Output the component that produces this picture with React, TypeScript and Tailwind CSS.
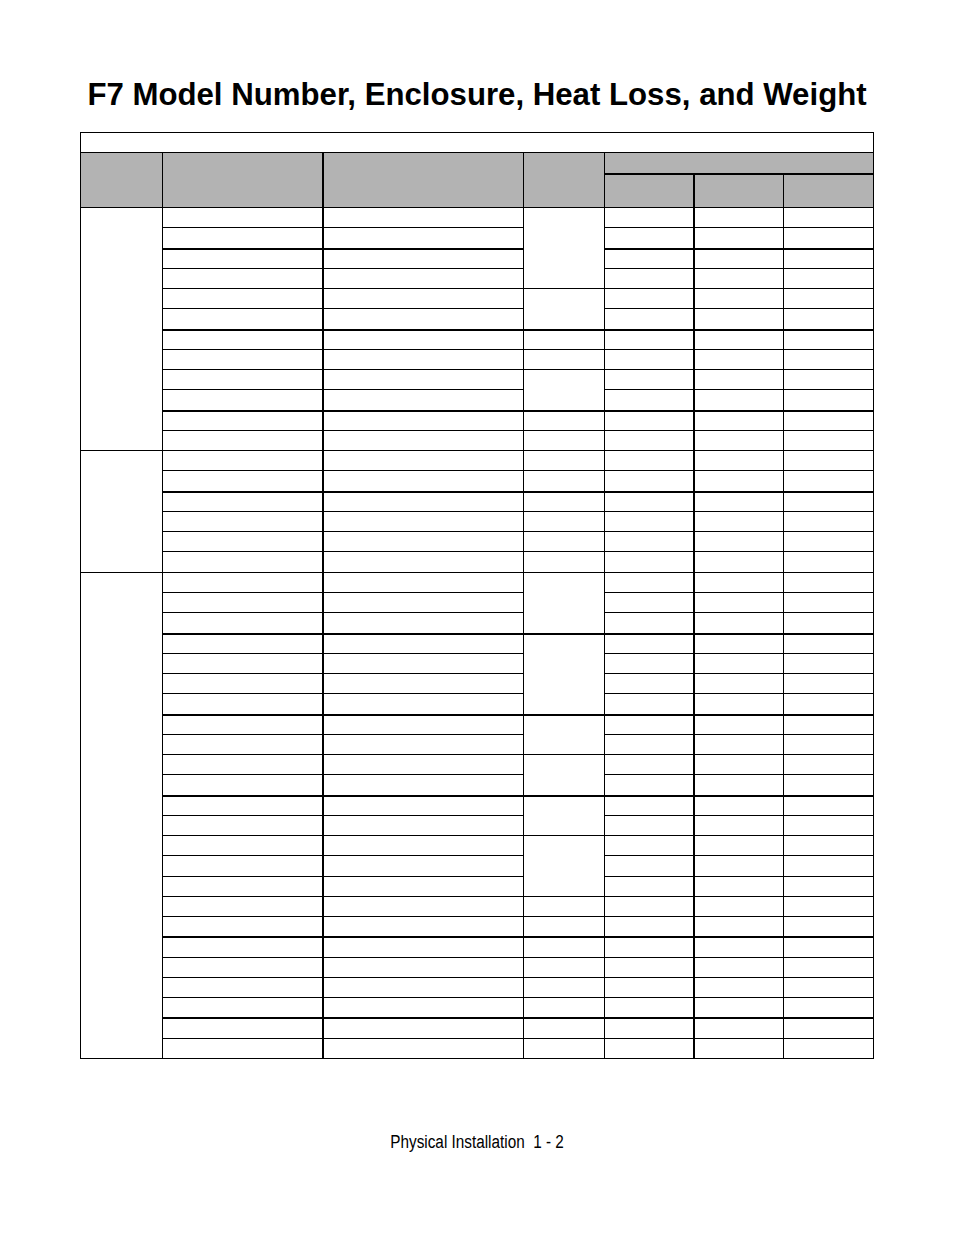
const SPAN: Record<number, string> = {
  1: "row-span-1",
  2: "row-span-2",
  3: "row-span-3",
  4: "row-span-4",
  6: "row-span-6",
  12: "row-span-12",
  24: "row-span-24",
};

const COL: Record<number, string> = {
  1: "col-start-1",
  2: "col-start-2",
  3: "col-start-3 border-l-2",
  4: "col-start-4",
  5: "col-start-5",
  6: "col-start-6 border-l-2",
  7: "col-start-7",
};

// rows (0-based, within the data block) that start with a heavy rule
const THICK = new Set([2, 6, 10, 14, 21, 25, 29, 36, 40]);

// merged runs for the frame-size column and the enclosure column
const GROUPS = [12, 6, 24];
const ENCL = [4, 2, 1, 1, 2, 1, 1, 1, 1, 1, 1, 1, 1, 3, 4, 2, 2, 2, 3, 1, 1, 1, 1, 1, 1, 1, 1];

type Cell = { row: number; col: number; span: number };

function buildCells(): Cell[] {
  const cells: Cell[] = [];
  let r = 0;
  for (const g of GROUPS) {
    cells.push({ row: r, col: 1, span: g });
    r += g;
  }
  r = 0;
  for (const e of ENCL) {
    cells.push({ row: r, col: 4, span: e });
    r += e;
  }
  for (let i = 0; i < 42; i++) {
    for (const c of [2, 3, 5, 6, 7]) cells.push({ row: i, col: c, span: 1 });
  }
  return cells.sort((a, b) => a.row - b.row || a.col - b.col);
}

function DataCell({ cell }: { cell: Cell }) {
  const thick = THICK.has(cell.row) ? "border-t-2" : "border-t";
  // grid rows 1..3 are title + header, data starts at grid row 4
  return (
    <div
      className={`${COL[cell.col]} ${SPAN[cell.span]} ${thick} border-l border-black bg-white`}
      style={{ gridRowStart: cell.row + 4 }}
    />
  );
}

export default function App() {
  const cells = buildCells();
  return (
    <div className="min-h-[1235px] w-[954px] bg-white text-black font-['Liberation_Sans',Arial,sans-serif]">
      <h1 className="pt-[77px] text-center text-[31.2px] font-bold leading-[36px]">
        F7 Model Number, Enclosure, Heat Loss, and Weight
      </h1>

      <div className="ml-[80px] mt-[19px] grid h-[927px] w-[794px] grid-cols-[82px_160px_201px_81px_89px_90px_90px] grid-rows-[20px_21px_34px_repeat(42,minmax(0,1fr))] border-r border-b border-black">
        {/* title row */}
        <div className="col-span-7 row-start-1 border-l border-t border-black bg-white" />

        {/* header */}
        <div className="col-start-1 row-span-2 row-start-2 border-l border-t border-black bg-[#b3b3b3]" />
        <div className="col-start-2 row-span-2 row-start-2 border-l border-t border-black bg-[#b3b3b3]" />
        <div className="col-start-3 row-span-2 row-start-2 border-l-2 border-t border-black bg-[#b3b3b3]" />
        <div className="col-start-4 row-span-2 row-start-2 border-l border-t border-black bg-[#b3b3b3]" />
        <div className="col-span-3 col-start-5 row-start-2 border-l border-t border-black bg-[#b3b3b3]" />
        <div className="col-start-5 row-start-3 border-l border-t-2 border-black bg-[#b3b3b3]" />
        <div className="col-start-6 row-start-3 border-l-2 border-t-2 border-black bg-[#b3b3b3]" />
        <div className="col-start-7 row-start-3 border-l border-t-2 border-black bg-[#b3b3b3]" />

        {cells.map((c) => (
          <DataCell key={`${c.row}-${c.col}`} cell={c} />
        ))}
      </div>

      <p className="mt-[73px] text-center text-[18px] leading-[20px]">
        <span className="inline-block origin-center scale-x-[0.85] whitespace-pre">
          {"Physical Installation  1 - 2"}
        </span>
      </p>
    </div>
  );
}
